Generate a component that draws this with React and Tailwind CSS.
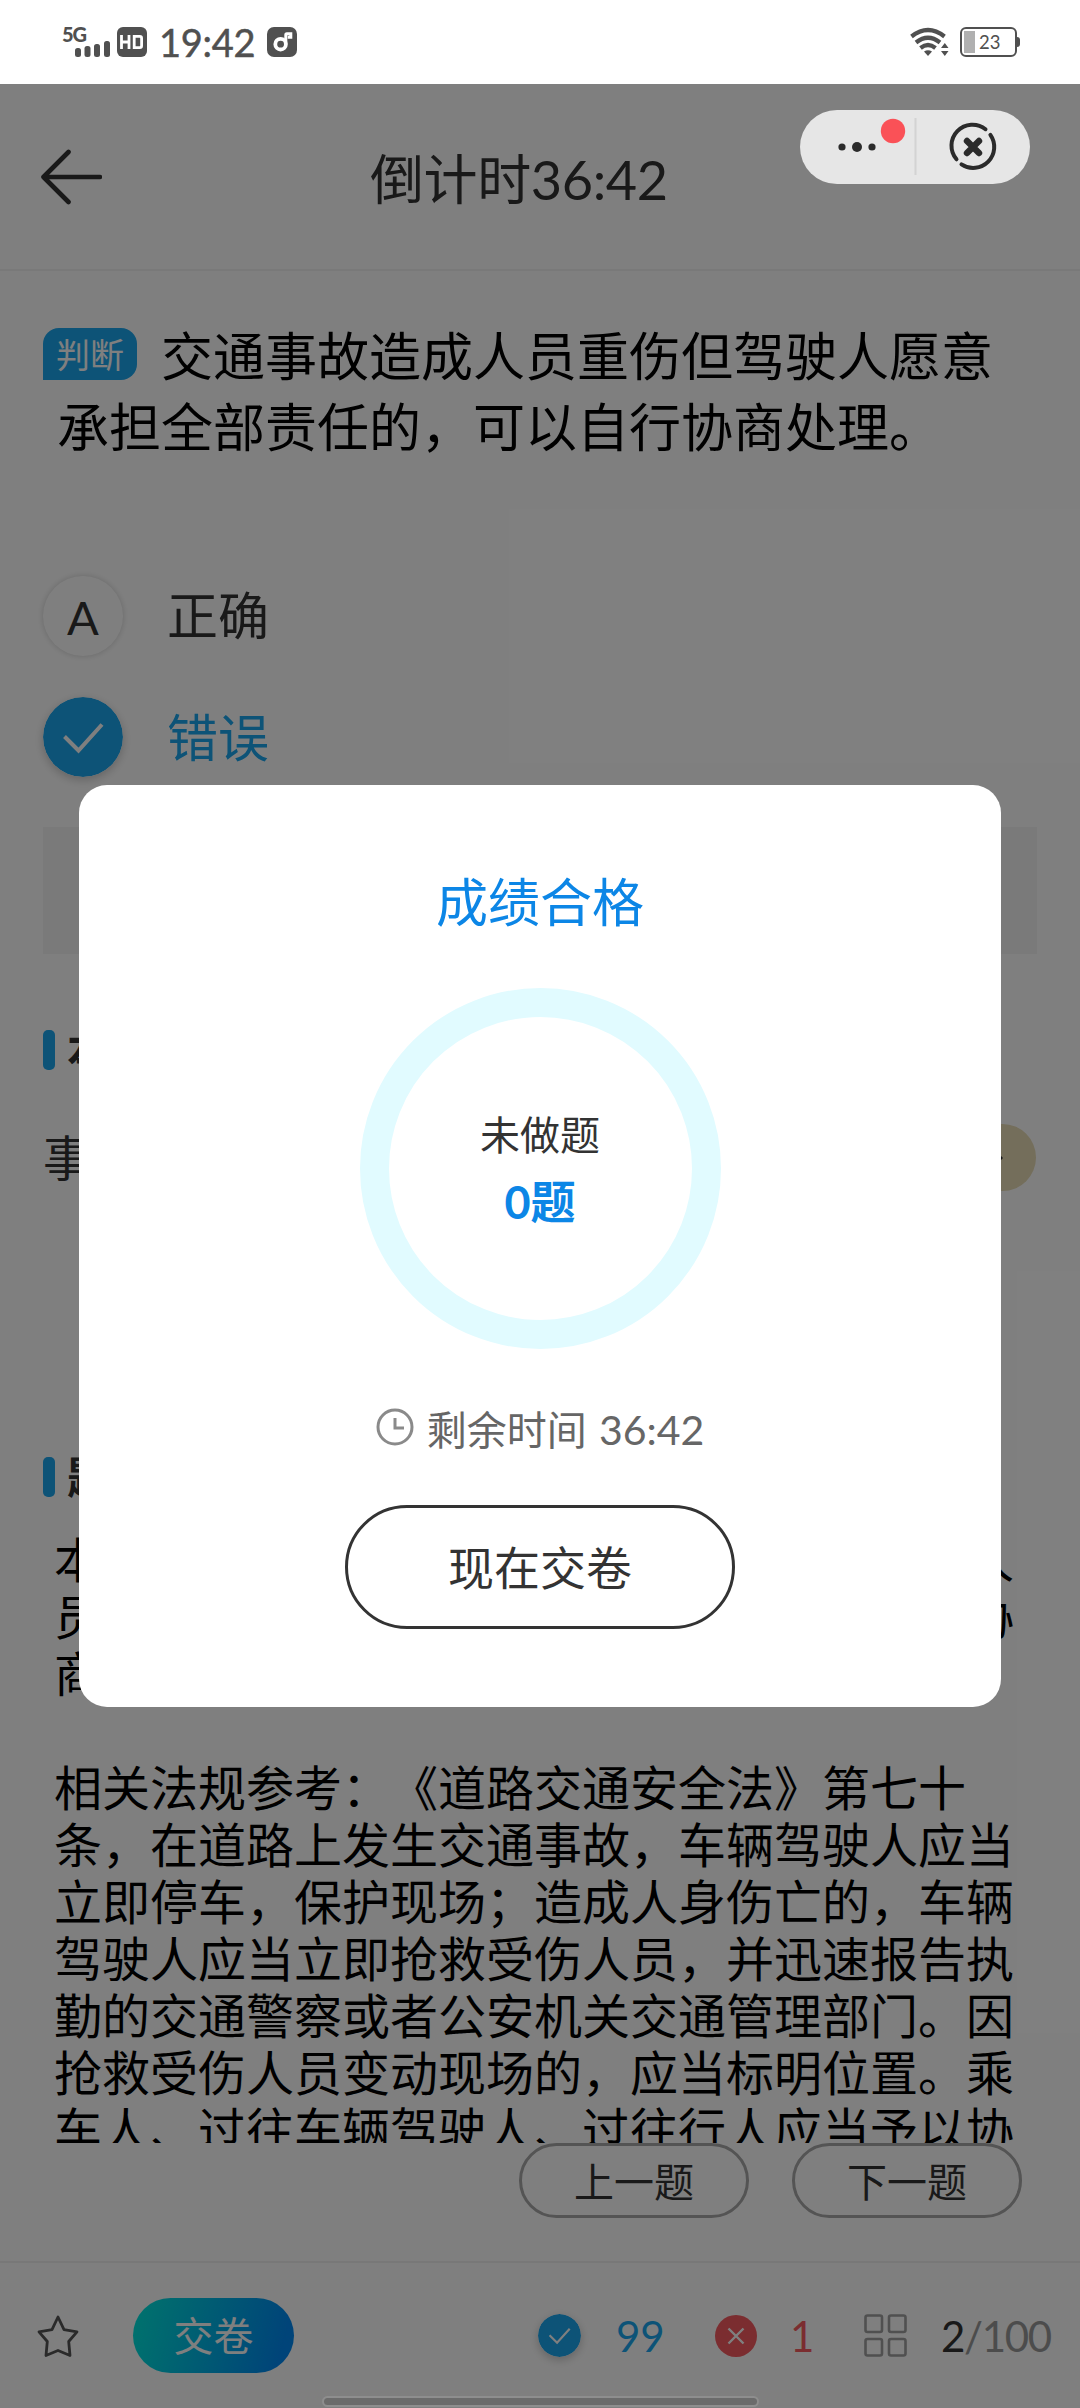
import React from 'react';

const explanation = [
  '本题考查的是事故的处理，机动车事故造成人',
  '员伤亡的，应当立即报警处理，不可以自行协',
  '商处理。',
  '',
  '相关法规参考：《道路交通安全法》第七十',
  '条，在道路上发生交通事故，车辆驾驶人应当',
  '立即停车，保护现场；造成人身伤亡的，车辆',
  '驾驶人应当立即抢救受伤人员，并迅速报告执',
  '勤的交通警察或者公安机关交通管理部门。因',
  '抢救受伤人员变动现场的，应当标明位置。乘',
  '车人、过往车辆驾驶人、过往行人应当予以协',
];

function StatusBar() {
  return (
    <div className="h-[84px] shrink-0 bg-white flex items-center text-[#505050]">
      <div className="ml-[62px] w-[49px] h-[34px] relative">
        <span className="absolute left-0 top-0 text-[20px] leading-[18px] font-black tracking-[-1px]">5G</span>
        <svg className="absolute left-[13px] top-[16px]" width="36" height="16" viewBox="0 0 36 16" fill="currentColor">
          <rect x="0" y="7" width="6" height="9" rx="2.5" />
          <rect x="9.5" y="5" width="6" height="11" rx="2.5" />
          <rect x="19" y="3" width="6" height="13" rx="2.5" />
          <rect x="29" y="0" width="6" height="16" rx="2.5" />
        </svg>
      </div>
      <svg className="ml-[6px]" width="30" height="30" viewBox="0 0 30 30" fill="none">
        <rect width="30" height="30" rx="6" fill="currentColor" />
        <path d="M4.5 8v14M12 8v14M4.5 15h7.5M17.2 9.4h5.6q1.8 0 1.8 1.8v7.6q0 1.8-1.8 1.8h-5.6z" stroke="#fff" strokeWidth="2.8" />
      </svg>
      <span className="ml-[12px] w-[96px] text-[38px] leading-[84px] tracking-[-0.3px] [-webkit-text-stroke:0.5px_#505050]">19:42</span>
      <svg className="ml-[12px]" width="30" height="30" viewBox="0 0 30 30" fill="none">
        <rect width="30" height="30" rx="7" fill="currentColor" />
        <circle cx="13.6" cy="17.2" r="5.3" stroke="#fff" strokeWidth="3.8" />
        <path d="M18.8 17V7.8q0-1 1-1h4v3.4h-3" stroke="#fff" strokeWidth="3" />
      </svg>

      <svg className="ml-auto" width="40" height="30" viewBox="0 0 40 30" fill="none">
        <g stroke="currentColor" strokeWidth="4.2">
          <path d="M1.500 9.500Q18 -3.500 34.500 9.500" />
          <path d="M6 15.500Q18 6 30 15.500" />
          <path d="M10.500 21Q18 15 25.500 21" />
        </g>
        <path d="M14 24.500Q18 22 22 24.500L18 29z" fill="currentColor" />
        <path d="M31 21h7.500L34.800 16zM31 24h7.500L34.800 29z" fill="currentColor" />
      </svg>
      <div className="ml-[10px] mr-[60px] flex items-center">
        <div className="w-[57px] h-[30px] rounded-[6px] border-2 border-[#505050] p-[2px] flex items-center">
          <div className="w-[11px] h-[22px] bg-[#b0b0b0]" />
          <span className="ml-[4px] text-[18.5px] leading-[22px]">23</span>
        </div>
        <div className="w-[3px] h-[10px] rounded-r-sm bg-[#505050]" />
      </div>
    </div>
  );
}

function CheckCircle({ size }) {
  return (
    <svg width={size} height={size} viewBox="0 0 80 80" fill="none" className="rounded-full shadow-[0_3px_10px_rgba(0,0,0,0.22)]">
      <circle cx="40" cy="40" r="40" fill="#1aa6ee" />
      <path d="M21.500 39.500l14 14L59 27.500" stroke="#fff" strokeWidth="4" />
    </svg>
  );
}

function SectionTitle({ children, className }) {
  return (
    <div className={`h-[60px] flex items-center ${className}`}>
      <div className="w-[12px] h-[40px] rounded-[5px] bg-[#1aa6ee]" />
      <h3 className="ml-[12px] text-[44px] leading-[60px] font-bold text-[#333]">{children}</h3>
    </div>
  );
}

function ResultModal() {
  return (
    <div className="absolute left-[79px] top-[785px] w-[922px] h-[922px] bg-white rounded-[28px] flex flex-col items-center">
      <h2 className="mt-[87px] text-[52px] leading-[60px] text-[#0c86e6]">成绩合格</h2>
      <div className="mt-[56px] w-[361px] h-[361px] rounded-full border-[29px] border-[#e1fbff] flex flex-col items-center">
        <p className="mt-[90px] text-[40px] leading-[56px] text-[#333]">未做题</p>
        <p className="mt-[11px] text-[45px] leading-[56px] font-bold text-[#0c86e6]">0题</p>
      </div>
      <div className="mt-[49px] flex items-center text-[#666]">
        <svg width="38" height="38" viewBox="0 0 38 38" fill="none" stroke="#8a8a8a" strokeWidth="3" className="-mt-[6px]">
          <circle cx="19" cy="19" r="17" />
          <path d="M19 10v10h9" />
        </svg>
        <span className="ml-[13px] text-[40px] leading-[64px]">剩余时间 <span className="text-[41px] ml-[2px]">36:42</span></span>
      </div>
      <button className="mt-[43px] w-[390px] h-[124px] rounded-full border-3 border-[#333] pt-[2px] text-[46px] leading-[60px] text-[#333]">
        现在交卷
      </button>
    </div>
  );
}

function Capsule() {
  return (
    <div className="absolute left-[800px] top-[110px] w-[230px] h-[74px] rounded-full bg-[#e6e6e6] flex items-center">
      <svg width="230" height="74" viewBox="0 0 230 74" fill="none">
        <g fill="#2b2b2b">
          <circle cx="42" cy="37" r="3.6" />
          <circle cx="57" cy="37" r="5" />
          <circle cx="72" cy="37" r="3.6" />
        </g>
        <circle cx="93" cy="21" r="12.2" fill="#fa5157" />
        <path d="M115.500 8v57" stroke="#d3d3d3" strokeWidth="2" />
        <g stroke="#2b2b2b" strokeLinecap="round">
          <path d="M185.500 19.200A21 21 0 0 0 156.500 49.300" strokeWidth="4" />
          <path d="M190.400 24.800A21 21 0 0 1 161.500 54.300" strokeWidth="4" />
          <path d="M167 31l12 12M179 31l-12 12" strokeWidth="6.4" />
        </g>
      </svg>
    </div>
  );
}

export default function App() {
  return (
    <div className="relative w-[1080px] h-[2408px] overflow-hidden bg-white flex flex-col font-[Lato,'Noto_Sans_CJK_SC',sans-serif] [text-spacing-trim:space-all]">
      <StatusBar />

      <header className="h-[187px] shrink-0 border-b-2 border-[#f3f3f3] flex items-center">
        <svg className="ml-[40px]" width="62" height="56" viewBox="0 0 62 56" fill="none" stroke="#333" strokeWidth="4.6" strokeLinecap="round" strokeLinejoin="round">
          <path d="M28.500 3L3.500 28l25 25M3.500 28H60" />
        </svg>
        <h1 className="ml-[268px] pt-[7px] text-[54px] leading-[64px] tracking-[-0.4px] text-[#333]">倒计时36:42</h1>
      </header>

      <main className="h-[1872px] shrink-0 overflow-hidden px-[43px] pt-[50px]">
        <div className="text-[52px] leading-[71px] text-black whitespace-nowrap">
          <div className="flex items-center">
            <span className="w-[94px] h-[52px] -mt-[5px] mr-[24px] rounded-2xl rounded-bl-none bg-[#1aa6ee] text-white text-[34px] leading-[54px] text-center">判断</span>
            交通事故造成人员重伤但驾驶人愿意
          </div>
          <div className="pl-[14px]">承担全部责任的，可以自行协商处理。</div>
        </div>

        <div className="mt-[112px] flex items-center">
          <div className="w-[80px] h-[80px] rounded-full shadow-[0_0_6px_rgba(0,0,0,0.18)] text-center text-[47px] leading-[82px] text-[#333]">A</div>
          <span className="ml-[44px] text-[51px] leading-[82px] text-[#333]">正确</span>
        </div>
        <div className="mt-[39px] flex items-center">
          <CheckCircle size={80} />
          <span className="ml-[44px] pt-[2px] text-[51px] leading-[80px] text-[#1aa6ee]">错误</span>
        </div>

        <div className="mt-[49px] h-[127px] bg-[#f4f4f4]" />

        <SectionTitle className="mt-[66px]">本题技巧</SectionTitle>
        <div className="mt-[44px] h-[67px] flex items-center justify-between text-[48px] leading-[67px] text-[#333]">
          <span>事故</span>
          <div className="w-[180px] h-[67px] mr-px rounded-full bg-[#e8dcb6] flex items-center justify-end pr-[33px]">
            <svg width="12" height="20" viewBox="0 0 12 20" fill="none" stroke="#333" strokeWidth="3">
              <path d="M2 2l8 8-8 8" />
            </svg>
          </div>
        </div>

        <SectionTitle className="mt-[256px]">题目解析</SectionTitle>
        <div className="mt-[24px] pl-[11px] text-[48px] leading-[57px] text-black whitespace-nowrap">
          {explanation.map((line, i) => (
            <p key={i} className="h-[57px]">{line}</p>
          ))}
        </div>
      </main>

      <div className="h-[118px] shrink-0 pr-[58px] flex justify-end gap-[43px] text-[40px] text-[#333]">
        <button className="w-[230px] h-[75px] rounded-full border-3 border-[#a8a8a8] leading-[72px]">上一题</button>
        <button className="w-[230px] h-[75px] rounded-full border-3 border-[#a8a8a8] leading-[72px]">下一题</button>
      </div>

      <footer className="h-[147px] shrink-0 border-t-2 border-[#f0f0f0] flex items-center text-[42px] leading-[60px]">
        <svg className="ml-[37px]" width="42" height="44" viewBox="0 0 42 44" fill="none" stroke="#555" strokeWidth="2.8" strokeLinejoin="round">
          <path d="M21 3l6 12.600 13 2.200-8.300 9.700 1.300 14L21 36.500 9 41.500l1.300-14L2 17.800l13-2.200z" />
        </svg>
        <button className="ml-[54px] w-[161px] h-[75px] rounded-full bg-linear-[105deg,#00e2dc_5%,#0088f2_90%] text-white text-[40px]">交卷</button>
        <div className="ml-[244px]"><CheckCircle size={43} /></div>
        <span className="ml-[35px] w-[48px] text-[#1aa6ee]">99</span>
        <svg className="ml-[51px]" width="42" height="42" viewBox="0 0 42 42" fill="none">
          <circle cx="21" cy="21" r="21" fill="#f65a60" />
          <path d="M13.500 13.500l15 15M28.500 13.500l-15 15" stroke="#fff" strokeWidth="2.400" />
        </svg>
        <span className="ml-[33px] w-[24px] text-[#f65a60]">1</span>
        <svg className="ml-[50px]" width="43" height="43" viewBox="0 0 43 43" fill="none" stroke="#a0a0a0" strokeWidth="2.600">
          <rect x="1.500" y="1.500" width="16.500" height="16.500" rx="2" />
          <rect x="25" y="1.500" width="16.500" height="16.500" rx="2" />
          <rect x="1.500" y="25" width="16.500" height="16.500" rx="2" />
          <rect x="25" y="25" width="16.500" height="16.500" rx="2" />
        </svg>
        <span className="ml-[34px] tracking-[-1.3px] text-[#333]">2<span className="text-[#999]">/100</span></span>
      </footer>

      {/* dimmed backdrop under the dialog */}
      <div className="absolute left-0 right-0 top-[84px] bottom-0 bg-black/50" />
      <Capsule />
      <ResultModal />
      <div className="absolute left-[324px] bottom-[3px] w-[433px] h-[7px] rounded-full bg-[#6b6b6b] ring-2 ring-[#8e8e8e]" />
    </div>
  );
}
